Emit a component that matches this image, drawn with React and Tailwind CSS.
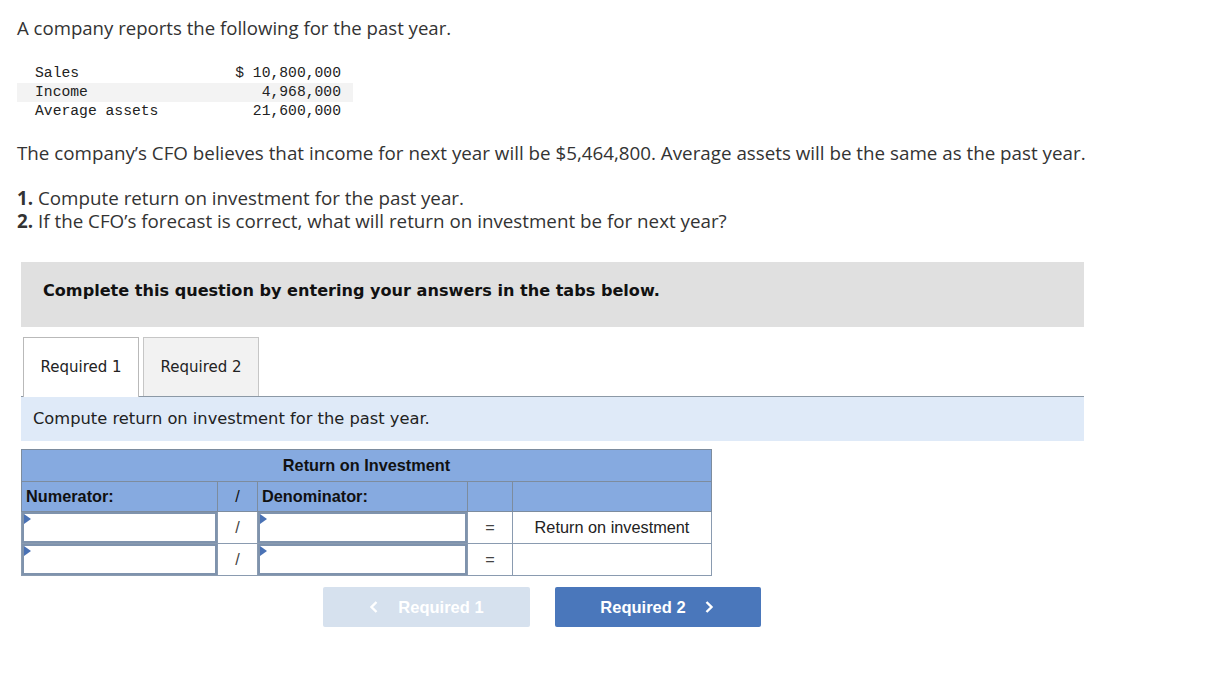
import React from 'react';

function Marker() {
  return (
    <span className="absolute left-0 top-0 w-0 h-0 border-t-[5px] border-b-[5px] border-l-[7px] border-t-transparent border-b-transparent border-l-[#4a72b5]" />
  );
}

function InputCell() {
  return (
    <td className="p-0 border border-[#8a9bb0]">
      <div className="relative h-[31px] border-2 border-[#7f93ad] bg-white">
        <Marker />
      </div>
    </td>
  );
}

export default function App() {
  const data = [
    ['Sales', '$ 10,800,000', false],
    ['Income', '4,968,000', true],
    ['Average assets', '21,600,000', false],
  ];

  return (
    <div className="w-[1211px] h-[696px] bg-white text-[#333] font-['Open_Sans',sans-serif] overflow-hidden">
      <div className="pl-[17px] pt-[15px]">
        <p className="text-[18.6px] leading-[25px]">A company reports the following for the past year.</p>

        <table className="mt-[24px] w-[336px] font-['Liberation_Mono',monospace] text-[14.7px] text-[#222] border-collapse">
          <tbody>
            {data.map(([label, value, shade]) => (
              <tr key={label} className={`h-[19px] ${shade ? 'bg-[#f3f3f3]' : ''}`}>
                <td className="pl-[18px] leading-[19px]">{label}</td>
                <td className="pr-[12px] text-right leading-[19px]">{value}</td>
              </tr>
            ))}
          </tbody>
        </table>

        <p className="mt-[20px] text-[18.8px] leading-[25px]">
          The company’s CFO believes that income for next year will be $5,464,800. Average assets will be the same as the past year.
        </p>

        <div className="mt-[21px] text-[18.8px]">
          <p className="h-[23px] leading-[23px]"><span className="font-bold">1.</span> Compute return on investment for the past year.</p>
          <p className="h-[23px] leading-[23px]"><span className="font-bold">2.</span> If the CFO’s forecast is correct, what will return on investment be for next year?</p>
        </div>
      </div>

      <div className="ml-[21px] w-[1063px]">
        <div className="mt-[29px] h-[65px] bg-[#e0e0e0] flex items-center pl-[22px] pb-[7px]">
          <span className="font-['DejaVu_Sans',sans-serif] font-bold text-[16.1px] text-[#111]">
            Complete this question by entering your answers in the tabs below.
          </span>
        </div>

        <div className="mt-[10px] flex items-end gap-[4px] pl-[2px] border-b border-[#8c99a6]">
          <div className="w-[116px] h-[60px] bg-white border border-[#b9b9b9] border-b-0 -mb-px flex items-center justify-center font-['DejaVu_Sans',sans-serif] text-[15px] text-[#222]">
            Required 1
          </div>
          <div className="w-[116px] h-[59px] bg-[#f2f2f2] border border-[#c6c6c6] border-b-0 flex items-center justify-center font-['DejaVu_Sans',sans-serif] text-[15px] text-[#222]">
            Required 2
          </div>
        </div>

        <div className="h-[44px] bg-[#dfeaf8] flex items-center pl-[12px]">
          <span className="font-['DejaVu_Sans',sans-serif] text-[16.3px] text-[#222]">Compute return on investment for the past year.</span>
        </div>

        <table className="mt-[8px] w-[690px] border-collapse font-['Liberation_Sans',Arial,sans-serif] text-[16.3px] text-[#111] table-fixed">
          <colgroup>
            <col className="w-[196px]" />
            <col className="w-[40px]" />
            <col className="w-[210px]" />
            <col className="w-[45px]" />
            <col className="w-[199px]" />
          </colgroup>
          <tbody>
            <tr className="h-[32px] bg-[#86aae0]">
              <td colSpan={5} className="border border-[#7d8c9e] text-center font-bold">Return on Investment</td>
            </tr>
            <tr className="h-[30px] bg-[#86aae0] font-bold">
              <td className="border border-[#7d8c9e] pl-[4px]">Numerator:</td>
              <td className="border border-[#7d8c9e] text-center font-normal">/</td>
              <td className="border border-[#7d8c9e] pl-[4px]">Denominator:</td>
              <td className="border border-[#7d8c9e]"></td>
              <td className="border border-[#7d8c9e]"></td>
            </tr>
            <tr className="h-[32px]">
              <InputCell />
              <td className="border border-[#8a9bb0] text-center text-[#444]">/</td>
              <InputCell />
              <td className="border border-[#8a9bb0] text-center text-[#444]">=</td>
              <td className="border border-[#8a9bb0] text-center text-[#222]">Return on investment</td>
            </tr>
            <tr className="h-[31px]">
              <InputCell />
              <td className="border border-[#8a9bb0] text-center text-[#444]">/</td>
              <InputCell />
              <td className="border border-[#8a9bb0] text-center text-[#444]">=</td>
              <td className="border border-[#8a9bb0]"></td>
            </tr>
          </tbody>
        </table>

        <div className="mt-[11px] flex gap-[25px] pl-[302px] font-['Liberation_Sans',Arial,sans-serif] font-bold text-[16.5px]">
          <div className="w-[207px] h-[40px] rounded-[2px] bg-[#d6e1ee] text-white flex items-center justify-center gap-[19px]">
            <svg width="10" height="14" viewBox="0 0 10 14" fill="none" stroke="currentColor" strokeWidth="2.4"><path d="M7.5 2 L2.5 7 L7.5 12" /></svg>
            <span>Required 1</span>
          </div>
          <div className="w-[206px] h-[40px] rounded-[2px] bg-[#4a77bb] text-white flex items-center justify-center gap-[18px] pr-[2px]">
            <span>Required 2</span>
            <svg width="10" height="14" viewBox="0 0 10 14" fill="none" stroke="currentColor" strokeWidth="2.4"><path d="M2.5 2 L7.5 7 L2.5 12" /></svg>
          </div>
        </div>
      </div>
    </div>
  );
}
